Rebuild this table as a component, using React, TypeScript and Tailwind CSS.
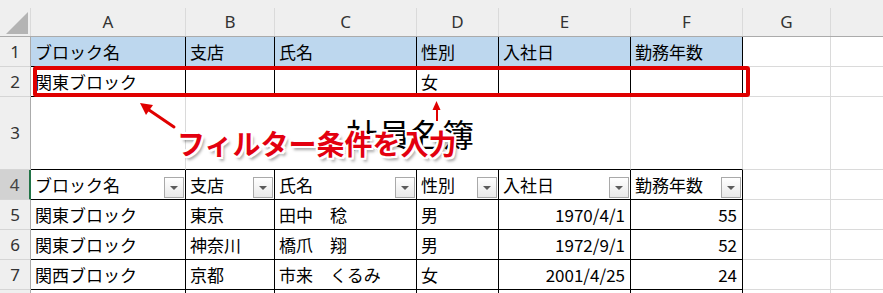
import React from "react";

const COLS = "grid grid-cols-[31px_155px_89px_142px_82px_132px_112px_88px_60px]";
const CELL_FONT = "font-['Noto_Sans_CJK_JP','Noto_Sans',sans-serif] text-[17px] text-black";
const HEAD_FONT = "font-['Noto_Sans','Noto_Sans_CJK_JP',sans-serif] text-[17px] text-[#333]";

const letters = ["A", "B", "C", "D", "E", "F", "G", ""];
const fields = ["ブロック名", "支店", "氏名", "性別", "入社日", "勤務年数"];

type Row = { block: string; branch: string; name: string; sex: string; date: string; years: string };
const rows: Row[] = [
  { block: "関東ブロック", branch: "東京", name: "田中　稔", sex: "男", date: "1970/4/1", years: "55" },
  { block: "関東ブロック", branch: "神奈川", name: "橋爪　翔", sex: "男", date: "1972/9/1", years: "52" },
  { block: "関西ブロック", branch: "京都", name: "市来　くるみ", sex: "女", date: "2001/4/25", years: "24" },
];

function RowHead({ n, active }: { n?: string; active?: boolean }) {
  return (
    <div
      className={
        active
          ? `flex items-center justify-center bg-[#d2d2d2] border-b border-[#d5d5d5] border-r-2 border-r-[#217346] ${HEAD_FONT} text-[#444]`
          : `flex items-center justify-center bg-[#efefef] border-b border-[#d5d5d5] border-r border-r-[#ababab] ${HEAD_FONT}`
      }
    >
      {n}
    </div>
  );
}

function Grid({ className = "" }: { className?: string }) {
  return <div className={`border-r border-b border-[#dadada] ${className}`} />;
}

function FilterButton() {
  return (
    <div className="self-end mb-px mr-px w-5 h-[21px] shrink-0 flex items-center justify-center border border-[#a9a9a9] bg-gradient-to-b from-white to-[#e9e9e9]">
      <div className="w-0 h-0 border-x-[4px] border-x-transparent border-t-[4px] border-t-[#5b5b5b]" />
    </div>
  );
}

function Cell({
  children,
  className = "",
  right,
  filter,
}: {
  children?: React.ReactNode;
  className?: string;
  right?: boolean;
  filter?: boolean;
}) {
  return (
    <div
      className={`flex items-center border-r border-b border-black ${CELL_FONT} ${
        right ? "justify-end pr-[5px]" : "justify-between pl-1"
      } ${className}`}
    >
      <span className="whitespace-pre leading-none">{children}</span>
      {filter && <FilterButton />}
    </div>
  );
}

export default function App() {
  return (
    <div className="relative w-[883px] h-[293px] overflow-hidden bg-white">
      {/* column letters */}
      <div className={`${COLS} h-[37px] bg-[#efefef] border-b border-[#ababab]`}>
        <div className="relative border-r border-[#dadada] mt-2">
          <svg className="absolute left-0 top-[-8px]" width="31" height="37" viewBox="0 0 31 37">
            <polygon points="6,34 28,34 28,12" fill="#b4b4b4" />
          </svg>
        </div>
        {letters.map((l, i) => (
          <div
            key={i}
            className={`mt-2 flex items-center justify-center border-r border-[#dadada] pb-px ${HEAD_FONT}`}
          >
            {l}
          </div>
        ))}
      </div>

      {/* row 1: criteria header */}
      <div className={`${COLS} h-[30px]`}>
        <RowHead n="1" />
        {fields.map((f) => (
          <Cell key={f} className="bg-[#bdd7ee]">
            {f}
          </Cell>
        ))}
        <Grid />
        <Grid />
      </div>

      {/* row 2: criteria values */}
      <div className={`${COLS} h-[30px]`}>
        <RowHead n="2" />
        <Cell>関東ブロック</Cell>
        <Cell />
        <Cell />
        <Cell>女</Cell>
        <Cell />
        <Cell />
        <Grid />
        <Grid />
      </div>

      {/* row 3: title */}
      <div className={`${COLS} h-[73px]`}>
        <RowHead n="3" />
        <div className="border-r border-[#dadada] border-b border-b-black" />
        <div className="col-span-4 flex items-center justify-center border-r border-[#dadada] border-b border-b-black">
          <span className="font-['Noto_Sans_CJK_JP',sans-serif] text-[32px] leading-none text-black pl-1">
            社員名簿
          </span>
        </div>
        <div className="border-r border-[#dadada] border-b border-b-black" />
        <Grid />
        <Grid />
      </div>

      {/* row 4: table header with filter buttons */}
      <div className={`${COLS} h-[30px]`}>
        <RowHead n="4" active />
        {fields.map((f) => (
          <Cell key={f} filter>
            {f}
          </Cell>
        ))}
        <Grid />
        <Grid />
      </div>

      {/* rows 5-7: records */}
      {rows.map((r, i) => (
        <div key={i} className={`${COLS} h-[30px]`}>
          <RowHead n={String(i + 5)} />
          <Cell>{r.block}</Cell>
          <Cell>{r.branch}</Cell>
          <Cell>{r.name}</Cell>
          <Cell>{r.sex}</Cell>
          <Cell right>{r.date}</Cell>
          <Cell right>{r.years}</Cell>
          <Grid />
          <Grid />
        </div>
      ))}

      {/* row 8, only its top edge shows */}
      <div className={`${COLS} h-[30px]`}>
        <RowHead />
        <Cell />
        <Cell />
        <Cell />
        <Cell />
        <Cell />
        <Cell />
        <Grid />
        <Grid />
      </div>

      {/* highlight around the criteria row */}
      <div className="absolute left-[33px] top-[66px] w-[717px] h-[31px] border-4 border-[#e00000] rounded-[3px]" />

      {/* callout arrows */}
      <svg className="absolute inset-0 pointer-events-none" width="883" height="293" viewBox="0 0 883 293">
        <line x1="174" y1="127" x2="149" y2="110" stroke="#e00000" strokeWidth="3" strokeLinecap="round" />
        <polygon points="140,103 153,105 146,115" fill="#e00000" />
        <line x1="437" y1="121" x2="437" y2="109" stroke="#e00000" strokeWidth="2" />
        <polygon points="436.5,101 432.5,110 440.5,110" fill="#e00000" />
      </svg>

      {/* callout label */}
      <div className="absolute left-[177px] top-[129px] font-['Noto_Sans_CJK_JP',sans-serif] font-bold text-[28px] leading-none text-[#e3000f] whitespace-nowrap [text-shadow:2px_0_0_#fff,-2px_0_0_#fff,0_2px_0_#fff,0_-2px_0_#fff,2px_2px_0_#fff,-2px_-2px_0_#fff,2px_-2px_0_#fff,-2px_2px_0_#fff,3px_4px_3px_rgba(0,0,0,0.35)]">
        フィルター条件を入力
      </div>
    </div>
  );
}
